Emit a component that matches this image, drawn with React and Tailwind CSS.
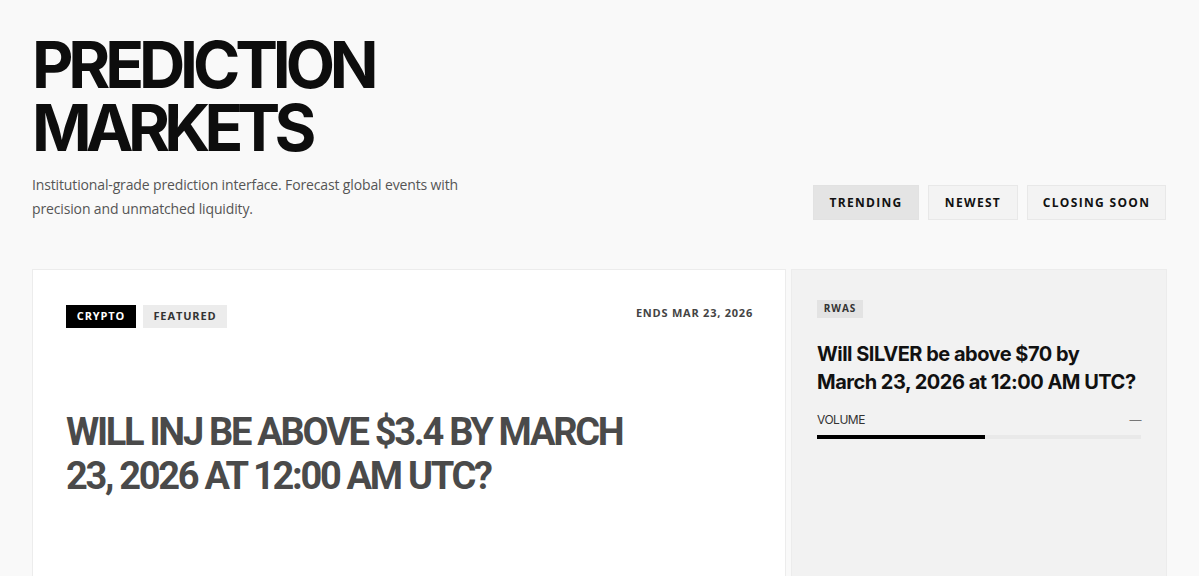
export default function App() {
  const sans = { fontFamily: '"Open Sans", "Liberation Sans", sans-serif' };
  const head = { fontFamily: 'Inter, "Liberation Sans", sans-serif' };
  const roboto = { fontFamily: 'Roboto, Inter, "Liberation Sans", sans-serif' };
  return (
    <div className="min-h-[576px] w-full bg-[#f9f9f9] px-8 pt-[33px] overflow-hidden" style={sans}>
      <div className="flex items-end justify-between">
        <div>
          <h1 className="text-[64px] font-bold leading-[63px] tracking-[-0.08em] text-[#0d0d0d]" style={head}>
            PREDICTION
            <br />
            <span className="tracking-[-0.09em]">MARKETS</span>
          </h1>
          <p className="mt-[14px] text-[14px] leading-[24px] tracking-[-0.01em] text-[#555555]">
            Institutional-grade prediction interface. Forecast global events with
            <br />
            precision and unmatched liquidity.
          </p>
        </div>
        <div className="mb-[1px] mr-[1px] flex gap-[9px]">
          <button className="h-[35px] w-[106px] border border-[#e2e2e2] bg-[#e4e4e4] text-[12px] font-bold tracking-[0.11em] text-[#111]">
            TRENDING
          </button>
          <button className="h-[35px] w-[90px] border border-[#e8e8e8] bg-[#f3f3f3] text-[12px] font-bold tracking-[0.11em] text-[#111]">
            NEWEST
          </button>
          <button className="h-[35px] w-[139px] border border-[#e8e8e8] bg-[#f3f3f3] text-[12px] font-bold tracking-[0.11em] text-[#111]">
            CLOSING SOON
          </button>
        </div>
      </div>

      <div className="mt-[48px] grid grid-cols-[754px_1fr] gap-[5px]">
        <div className="h-[330px] border border-[#ececec] bg-white pl-[33px] pr-8 pt-[35px]">
          <div className="flex items-center justify-between">
            <div className="flex gap-[7px]">
              <span className="flex h-[23px] w-[70px] items-center justify-center bg-black text-[11px] font-bold tracking-[0.08em] text-white">
                CRYPTO
              </span>
              <span className="flex h-[23px] w-[84px] items-center justify-center bg-[#ececec] text-[11px] font-bold tracking-[0.08em] text-[#333]">
                FEATURED
              </span>
            </div>
            <span className="-mt-[6px] text-[11px] font-bold tracking-[0.07em] text-[#444]">ENDS MAR 23, 2026</span>
          </div>
          <h2 className="mt-[82px] text-[38px] font-bold leading-[44px] tracking-[-0.06em] text-[#4a4a4a]" style={roboto}>
            WILL INJ BE ABOVE $3.4 BY MARCH
            <br />
            23, 2026 AT 12:00 AM UTC?
          </h2>
        </div>
        <div className="h-[330px] border border-[#ececec] bg-[#f2f2f2] px-[25px] pt-[24px]">
          <span className="inline-flex h-[18px] w-[46px] items-center justify-center bg-[#e3e3e3] text-[10px] font-bold tracking-[0.1em] text-[#333]">
            RWAS
          </span>
          <h3 className="mt-[22px] text-[20px] font-bold leading-[28px] tracking-[-0.025em] text-[#111]" style={head}>
            Will SILVER be above $70 by
            <br />
            March 23, 2026 at 12:00 AM UTC?
          </h3>
          <div className="mt-[15px] flex items-center justify-between text-[12px] tracking-[-0.04em] text-[#333]" style={head}>
            <span>VOLUME</span>
            <span className="text-[#777]">—</span>
          </div>
          <div className="mt-[6px] h-[4px] w-full bg-[#e9e9e9]">
            <div className="h-full bg-black" style={{ width: '52%' }} />
          </div>
        </div>
      </div>
    </div>
  );
}
